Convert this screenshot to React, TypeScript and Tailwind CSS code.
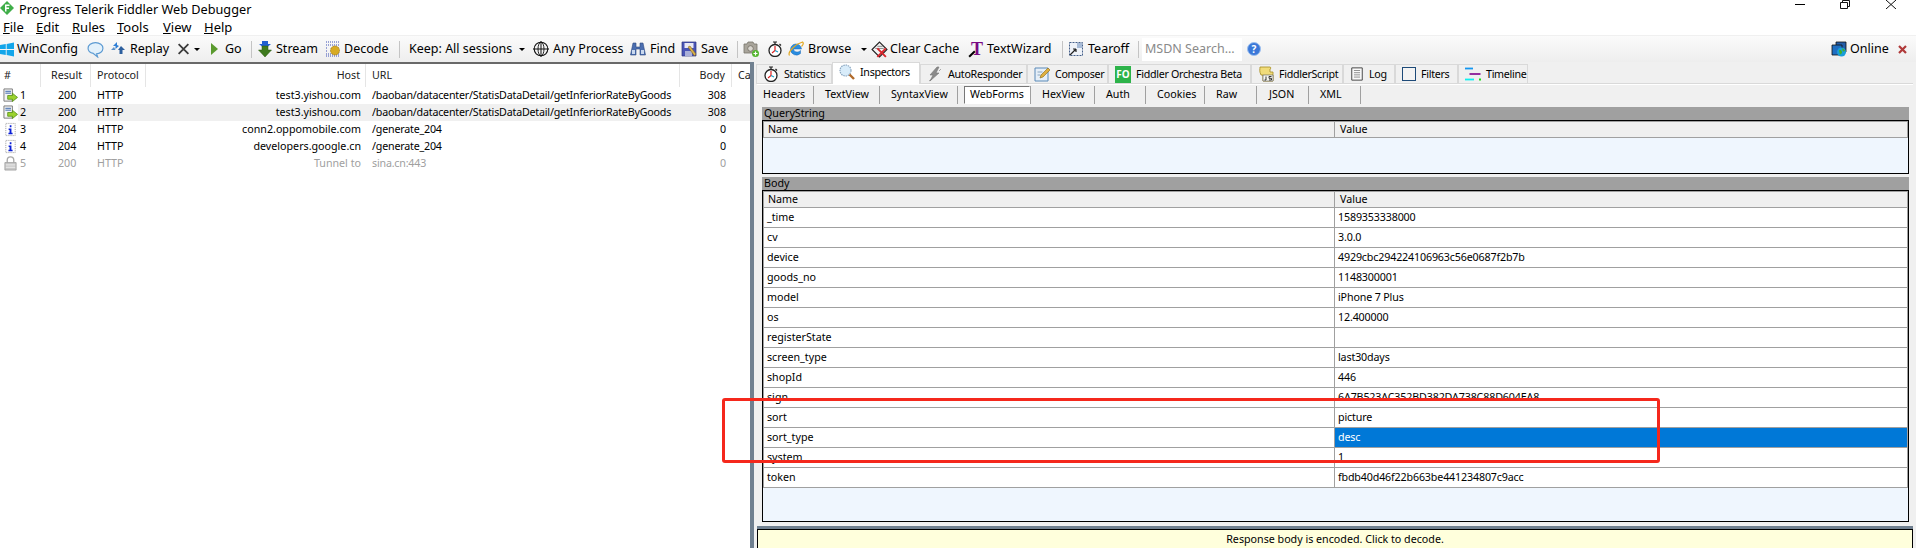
import React from 'react';

const Svg = ({ children, className = 'w-4 h-4' }: { children: React.ReactNode; className?: string }) => (
    <svg viewBox="0 0 16 16" className={`shrink-0 ${className}`}>{children}</svg>
);

const Stopwatch = () => (
    <Svg>
        <path d="M6 1h4M8 1v2M12.5 3l1.5 1.5" stroke="#222" strokeWidth="1.2" fill="none" />
        <circle cx="8" cy="9.5" r="6" fill="#fff" stroke="#222" strokeWidth="1.3" />
        <path d="M8 5v4.5L5 12" stroke="#d22" strokeWidth="1.2" fill="none" />
        <path d="M8 9.5L11 11" stroke="#1aa3c9" strokeWidth="1.2" fill="none" />
    </Svg>
);

const WinLogo = () => (
    <Svg className="w-[14px] h-[15px]">
        <path d="M0 2.8L6.6 1.8V7.5H0zM7.6 1.6L16 0V7.5H7.6zM0 8.5H6.6V14.2L0 13.2zM7.6 8.5H16V16L7.6 14.4z" fill="#12a5ea" />
    </Svg>
);

const Bubble = () => (
    <Svg className="w-[17px] h-[17px]">
        <path d="M8 1.5c4 0 7 2.3 7 5.3s-3 5.2-6 5.2l1 3-4-3.3c-2.8-.6-5-2.5-5-4.9C1 3.8 4 1.5 8 1.5z" fill="#e3f1fb" stroke="#5c9ad2" strokeWidth="1.1" />
    </Svg>
);

const Replay = () => (
    <Svg>
        <path d="M7 1L3 5h2.5v3L9 5 7 4z" fill="#2f7fd6" />
        <path d="M1 9l3-3 1.5 3H4z" fill="#5a8fc8" />
        <path d="M11 5l4 4h-2.5v4h-3V9H8z" fill="#2c5f9e" />
    </Svg>
);

const RemoveX = () => (
    <Svg className="w-[13px] h-[14px]">
        <path d="M2 2l12 12M14 2L2 14" stroke="#3c3c3c" strokeWidth="2.2" fill="none" />
    </Svg>
);

const Caret = () => <span className="block w-0 h-0 shrink-0 border-x-[3px] border-x-transparent border-t-[3px] border-t-black" />;

const Stream = () => (
    <Svg>
        <path d="M5 0h6v3h3L8 8 2 3h3z" fill="#1f5fd0" />
        <path d="M5 5h6v4h3.5L8 16 1.5 9H5z" fill="#3f7a1e" stroke="#2a5a10" strokeWidth=".5" />
    </Svg>
);

const Decode = () => (
    <Svg>
        <path d="M1 1h14M1 4h14M1 7h2M1 10h2M1 13h14M1 15h14" stroke="#3b4fb5" strokeWidth="1" strokeDasharray="1 1" fill="none" />
        <circle cx="10" cy="9.5" r="4.5" fill="#d8ab24" stroke="#8a6a10" strokeWidth=".8" strokeDasharray="1 .7" />
    </Svg>
);

const Crosshair = () => (
    <Svg>
        <circle cx="8" cy="8" r="6.8" fill="none" stroke="#111" strokeWidth="1.1" />
        <ellipse cx="8" cy="8" rx="3" ry="6.8" fill="none" stroke="#111" strokeWidth=".9" />
        <path d="M0 8h16M8 0v16" stroke="#111" strokeWidth="1" />
    </Svg>
);

const Binoculars = () => (
    <Svg>
        <path d="M3 2h3v4h4V2h3l2.5 12H10V8H6v6H.5z" fill="#4b6eb0" stroke="#2f4a80" strokeWidth=".6" />
        <path d="M2 9h3v4H2zM11 9h3v4h-3z" fill="#c9d8ee" />
    </Svg>
);

const Floppy = () => (
    <Svg>
        <path d="M1 1h14v14H1z" fill="#4a55b5" stroke="#2c3580" strokeWidth=".7" />
        <path d="M3.5 2h9v5h-9z" fill="#e8e8f4" />
        <path d="M4 10h7v5H4z" fill="#aab0d8" />
        <path d="M7 6l2-1 6 8-1.5 2z" fill="#d9b24a" stroke="#7a5a10" strokeWidth=".5" />
    </Svg>
);

const Camera = () => (
    <Svg>
        <path d="M1 3h3l1-2h5l1 2h3v9H1z" fill="#a9a59b" stroke="#77736a" strokeWidth=".8" />
        <circle cx="7.5" cy="7.5" r="2.8" fill="#d9d6cf" stroke="#6e6a60" strokeWidth=".8" />
        <circle cx="12.5" cy="12.5" r="3.5" fill="#53b52d" />
        <path d="M10.5 12.5h4M12.5 10.5v4" stroke="#fff" strokeWidth="1.2" />
    </Svg>
);

const IeLogo = () => (
    <Svg>
        <path d="M2.5 9a5.5 5.5 0 0 1 11-1H5.5c0 3.3 4.5 4 7 1.5v3a6 6 0 0 1-10-3.5z" fill="#2a8de0" stroke="#1c6bb8" strokeWidth=".5" />
        <path d="M1.5 14.5C-1 11 8.5 2.5 14.5 1c1.5 1 .5 3-1 4.5" fill="none" stroke="#e2a822" strokeWidth="1.2" />
    </Svg>
);

const ClearCache = () => (
    <Svg className="w-[17px] h-[17px]">
        <path d="M8 1l7 7-7 7-7-7z" fill="#f4f4f4" stroke="#222" strokeWidth="1.1" />
        <path d="M4 7h8M6 5h5" stroke="#777" strokeWidth=".8" />
        <path d="M6 7l8 8M14 7l-8 8" stroke="#d8262c" strokeWidth="1.8" />
    </Svg>
);

const Wizard = () => (
    <span className="relative flex w-[15px] h-[16px] shrink-0 items-center justify-end">
        <span className="font-['Liberation_Serif',serif] font-bold text-[18px] leading-none text-[#7a0a84]">T</span>
        <span className="absolute left-0 bottom-[2px] w-[8px] h-[2px] -rotate-45 bg-black" />
    </span>
);

const Tearoff = () => (
    <Svg>
        <path d="M1.5 1.5h13v13h-13z" fill="#eef2f8" stroke="#46608a" strokeWidth="1" strokeDasharray="2 1" />
        <path d="M2 14l6-6M8 8H5M8 8v3" stroke="#222" strokeWidth="1.2" fill="none" />
        <path d="M9 2h5v5H9z" fill="#a8bcd8" />
    </Svg>
);

const Help = () => (
    <span className="flex w-[14px] h-[14px] shrink-0 items-center justify-center rounded-full bg-[#3b78d8] border border-[#9cc0f0] text-white text-[10px] font-bold leading-none">?</span>
);

const OnlineIcon = () => (
    <Svg>
        <path d="M5 1h10v10H5z" fill="#245da8" stroke="#111" strokeWidth=".8" />
        <path d="M1 4h10v10H1z" fill="#1f6ec2" stroke="#111" strokeWidth=".8" />
        <circle cx="10.5" cy="11" r="4.5" fill="#1a9ed8" />
        <path d="M8 9.5c1.5-1 2.5 0 3 1s-1 3-2 3zM11 7.5c1.5 0 3 1.5 3 2.5l-2 .5z" fill="#43b02a" />
    </Svg>
);

const SessionIcon = ({ kind }: { kind: string }) => {
    if (kind === 'arrow') {
        return (
            <Svg className="w-[15px] h-[15px]">
                <path d="M1 1h9v13H1z" fill="#f4f4f4" stroke="#777" strokeWidth="1" />
                <path d="M2.5 3.5h6M2.5 5.5h6" stroke="#2f5fa8" strokeWidth="1" />
                <path d="M5 8h5V5.5L15.5 10 10 14.5V12H5z" fill="#9bd22e" stroke="#4f8a12" strokeWidth=".8" />
            </Svg>
        );
    }
    if (kind === 'info') {
        return (
            <Svg className="w-[15px] h-[15px]">
                <path d="M3 1.5h10v13H3z" fill="#fff" stroke="#9a9a9a" strokeWidth="1" strokeDasharray="1 1" />
                <path d="M7.2 3.5h1.8v2H7.2zM6 7h3v4.5h1.2V13H5.8v-1.5H7V8.5H6z" fill="#0a1fd6" />
            </Svg>
        );
    }
    return (
        <Svg className="w-[15px] h-[15px]">
            <path d="M4.5 7V4.5a3.5 3.5 0 0 1 7 0V7" fill="none" stroke="#a8a8a8" strokeWidth="1.4" />
            <path d="M2 7h12v8H2z" fill="#c8c8c8" stroke="#9a9a9a" strokeWidth=".8" />
            <path d="M3 9.5h10M3 12h10" stroke="#eee" strokeWidth="1" />
        </Svg>
    );
};

const Sep = ({ className }: { className: string }) => (
    <div className={`flex shrink-0 ${className}`}><span className="w-px h-[17px] bg-[#c4c4c4]" /></div>
);

const Tool = ({ className, icon, label, gap = 'gap-1' }: { className: string; icon?: React.ReactNode; label?: string; gap?: string }) => (
    <div className={`flex shrink-0 items-center ${gap} ${className}`}>
        {icon}
        {label && <span className="whitespace-nowrap">{label}</span>}
    </div>
);

const sessions = [
    { id: 1, icon: 'arrow', result: 200, host: 'test3.yishou.com', url: '/baoban/datacenter/StatisDataDetail/getInferiorRateByGoods', body: 308 },
    { id: 2, icon: 'arrow', result: 200, host: 'test3.yishou.com', url: '/baoban/datacenter/StatisDataDetail/getInferiorRateByGoods', body: 308, selected: true },
    { id: 3, icon: 'info', result: 204, host: 'conn2.oppomobile.com', url: '/generate_204', body: 0 },
    { id: 4, icon: 'info', result: 204, host: 'developers.google.cn', url: '/generate_204', body: 0 },
    { id: 5, icon: 'lock', result: 200, host: 'Tunnel to', url: 'sina.cn:443', body: 0, muted: true },
];

const params = [
    ['_time', '1589353338000'],
    ['cv', '3.0.0'],
    ['device', '4929cbc294224106963c56e0687f2b7b'],
    ['goods_no', '1148300001'],
    ['model', 'iPhone 7 Plus'],
    ['os', '12.400000'],
    ['registerState', ''],
    ['screen_type', 'last30days'],
    ['shopId', '446'],
    ['sign', '6A7B523AC352BD382DA738C88D604EA8'],
    ['sort', 'picture'],
    ['sort_type', 'desc'],
    ['system', '1'],
    ['token', 'fbdb40d46f22b663be441234807c9acc'],
];

const tabs: { label: string; w: string; icon: React.ReactNode; active?: boolean }[] = [
    { label: 'Statistics', w: 'w-[76px]', icon: <Stopwatch /> },
    {
        label: 'Inspectors', w: 'w-[88px]', active: true, icon: (
            <Svg>
                <circle cx="6.5" cy="6.5" r="5.5" fill="#d8ecfa" stroke="#8aa6c0" strokeWidth="1.2" strokeDasharray="1.5 .8" />
                <path d="M10.5 10.5l4.5 4.5" stroke="#b06a2a" strokeWidth="2.4" />
            </Svg>
        )
    },
    {
        label: 'AutoResponder', w: 'w-[107px]', icon: (
            <Svg>
                <path d="M10 1L3 9h3l-3 6 9-8H9l3-6zM14 3l-2 2M5 13l-3 2" fill="#8a8a8a" stroke="#777" strokeWidth=".6" />
            </Svg>
        )
    },
    {
        label: 'Composer', w: 'w-[81px]', icon: (
            <Svg>
                <path d="M1 2h13v13H1z" fill="#e6eff8" stroke="#5b8ab8" strokeWidth="1" />
                <path d="M3.5 6h5M3.5 9h3" stroke="#8aa6c0" strokeWidth="1" />
                <path d="M6 12l1-3 7-7 2 2-7 7z" fill="#e0b040" stroke="#8a6a10" strokeWidth=".6" />
            </Svg>
        )
    },
    {
        label: 'Fiddler Orchestra Beta', w: 'w-[143px]', icon: (
            <span className="flex w-[16px] h-[17px] shrink-0 items-center justify-center bg-[#2db34a] text-white text-[10px] font-bold leading-none tracking-normal">FO</span>
        )
    },
    {
        label: 'FiddlerScript', w: 'w-[92px]', icon: (
            <Svg>
                <path d="M2 1h10c1 0 1 2 0 2v3h3v9H5V9H3C1 5 2 3 2 1z" fill="#f1dc7a" stroke="#a58a20" strokeWidth=".8" />
                <path d="M5 9h10v6H5z" fill="#f8f8f0" stroke="#555" strokeWidth=".6" />
                <path d="M8 10.5V14H6.5M13.5 10.5H11V12.3h2.5V14H11" fill="none" stroke="#222" strokeWidth=".9" />
            </Svg>
        )
    },
    {
        label: 'Log', w: 'w-[52px]', icon: (
            <Svg className="w-[14px] h-[14px]">
                <path d="M2 1h12v14H2z" fill="#fafafa" stroke="#444" strokeWidth="1.1" />
                <path d="M4.5 4h7M4.5 6.5h7M4.5 9h7M4.5 11.5h7" stroke="#777" strokeWidth=".9" />
            </Svg>
        )
    },
    {
        label: 'Filters', w: 'w-[63px]', icon: (
            <span className="w-[14px] h-[14px] shrink-0 border border-[#1d4a78] bg-[#f3f3f3]" />
        )
    },
    {
        label: 'Timeline', w: 'w-[70px]', icon: (
            <Svg>
                <path d="M0 2.5h8" stroke="#1497f0" strokeWidth="1.8" />
                <path d="M4.5 8h11" stroke="#8a1a96" strokeWidth="1.8" />
                <path d="M0 13.5h9" stroke="#10f0f0" strokeWidth="1.8" />
                <path d="M14 13.5h2" stroke="#18e018" strokeWidth="1.8" />
            </Svg>
        )
    },
];

const subTabs = [
    { label: 'Headers', w: 'w-[57px]', pad: 'pl-[6px]' },
    { label: 'TextView', w: 'w-[66px]', pad: 'pl-[11px]' },
    { label: 'SyntaxView', w: 'w-[78px]', pad: 'pl-[11px]' },
    { label: 'WebForms', w: 'w-[73px]', pad: 'pl-[12px]', active: true },
    { label: 'HexView', w: 'w-[64px]', pad: 'pl-[11px]' },
    { label: 'Auth', w: 'w-[51px]', pad: 'pl-[11px]' },
    { label: 'Cookies', w: 'w-[59px]', pad: 'pl-[11px]' },
    { label: 'Raw', w: 'w-[52px]', pad: 'pl-[11px]' },
    { label: 'JSON', w: 'w-[52px]', pad: 'pl-[12px]' },
    { label: 'XML', w: 'w-[52px]', pad: 'pl-[11px]' },
];

const ListHeader = () => (
    <div className="flex h-[17px] shrink-0 items-center bg-[#efefef] border border-[#a0a0a0]">
        <div className="w-[571px] pl-[4px] border-r border-[#a0a0a0] h-full flex items-center">Name</div>
        <div className="pl-[5px]">Value</div>
    </div>
);

export default function App() {
    return (
        <div className="relative flex flex-col w-[1916px] h-[548px] overflow-hidden bg-white text-black font-['Noto_Sans',sans-serif] text-[10.7px] leading-none">
            {/* title bar */}
            <div className="flex h-[18px] items-center justify-between shrink-0">
                <div className="flex items-center gap-[5px]">
                    <svg viewBox="0 0 14 14" className="w-[14px] h-[14px] shrink-0 -mt-[2px]">
                        <path d="M7 0l7 7-7 7-7-7z" fill="#3fae49" />
                        <path d="M5 3.5h4.5V5H6.5v1.5H9V8H6.5v2.5H5z" fill="#fff" />
                    </svg>
                    <span className="text-[12.7px] mt-[1px]">Progress Telerik Fiddler Web Debugger</span>
                </div>
                <div className="flex h-full items-start">
                    <span className="w-[10px] h-px bg-black mt-[4px]" />
                    <svg viewBox="0 0 10 9" className="w-[10px] h-[9px] ml-[35px]" fill="none" stroke="#111">
                        <path d="M.5 2.5h7v6h-7zM2.5 2.5V.5h7v6h-2" />
                    </svg>
                    <svg viewBox="0 0 10 9" className="w-[10px] h-[9px] ml-[36px] mr-[20px]">
                        <path d="M0 0l10 9M10 0L0 9" stroke="#111" strokeWidth="1" />
                    </svg>
                </div>
            </div>

            {/* menu */}
            <div className="flex h-[17px] shrink-0 items-center text-[13px] pl-[3px] pt-[2px]">
                <span className="w-[33px]"><u>F</u>ile</span>
                <span className="w-[36px]"><u>E</u>dit</span>
                <span className="w-[45px]"><u>R</u>ules</span>
                <span className="w-[46px]"><u>T</u>ools</span>
                <span className="w-[41px]"><u>V</u>iew</span>
                <span><u>H</u>elp</span>
            </div>

            {/* toolbar */}
            <div className="flex h-[27px] shrink-0 items-center border-t border-[#f0f0f0] bg-gradient-to-b from-[#fbfbfb] to-[#eeeeee] text-[12.5px]">
                <Tool className="w-[87px]" gap="gap-[3px]" icon={<WinLogo />} label="WinConfig" />
                <Tool className="w-[23px]" icon={<Bubble />} />
                <Tool className="w-[67px]" icon={<Replay />} label="Replay" />
                <Tool className="w-[33px]" icon={<><RemoveX /><Caret /></>} />
                <Tool className="w-[41px] pl-[1px]" gap="gap-[7px]" icon={<span className="w-0 h-0 border-y-[6px] border-y-transparent border-l-[7px] border-l-[#5a9a2e]" />} label="Go" />
                <Sep className="w-[6px]" />
                <Tool className="w-[68px]" gap="gap-[3px]" icon={<Stream />} label="Stream" />
                <Tool className="w-[74px]" gap="gap-[3px]" icon={<Decode />} label="Decode" />
                <Sep className="w-[10px]" />
                <div className="flex w-[124px] shrink-0 items-center gap-[7px] whitespace-nowrap">Keep: All sessions<Caret /></div>
                <Tool className="w-[97px]" icon={<Crosshair />} label="Any Process" />
                <Tool className="w-[51px]" icon={<Binoculars />} label="Find" />
                <Tool className="w-[56px]" icon={<Floppy />} label="Save" />
                <Sep className="w-[6px]" />
                <Tool className="w-[24px]" icon={<Camera />} />
                <Tool className="w-[21px]" icon={<Stopwatch />} />
                <div className="flex w-[83px] shrink-0 items-center gap-1"><IeLogo />Browse<span className="flex ml-[6px]"><Caret /></span></div>
                <Tool className="w-[97px]" gap="gap-[2px]" icon={<ClearCache />} label="Clear Cache" />
                <Tool className="w-[94px]" icon={<Wizard />} label="TextWizard" />
                <Sep className="w-[6px]" />
                <Tool className="w-[70px]" icon={<Tearoff />} label="Tearoff" />
                <Sep className="w-[4px]" />
                <div className="flex w-[100px] h-[23px] shrink-0 items-center bg-white pl-[3px] text-[#8a8a8a] whitespace-nowrap">MSDN Search...</div>
                <div className="w-[5px] shrink-0" />
                <Help />
                <div className="flex-1" />
                <OnlineIcon />
                <span className="ml-[3px] w-[48px]">Online</span>
                <svg viewBox="0 0 9 9" className="w-[9px] h-[9px] mr-[9px] shrink-0">
                    <path d="M1 1l7 7M8 1L1 8" stroke="#b03a3a" strokeWidth="2.2" />
                </svg>
            </div>

            <div className="flex flex-1 min-h-0">
                {/* session list */}
                <div className="flex flex-col w-[750px] shrink-0 border-t-2 border-[#696969] overflow-hidden">
                    <div className="grid grid-cols-[41px_50px_55px_220px_314px_52px_18px] h-[23px] shrink-0 items-center text-[#222]">
                        <div className="pl-[4px] h-full flex items-center border-r border-[#e5e5e5]">#</div>
                        <div className="pl-[10px] h-full flex items-center border-r border-[#e5e5e5]">Result</div>
                        <div className="pl-[6px] h-full flex items-center border-r border-[#e5e5e5]">Protocol</div>
                        <div className="pr-[5px] h-full flex items-center justify-end border-r border-[#e5e5e5]">Host</div>
                        <div className="pl-[6px] h-full flex items-center border-r border-[#e5e5e5]">URL</div>
                        <div className="pr-[6px] h-full flex items-center justify-end border-r border-[#e5e5e5]">Body</div>
                        <div className="pl-[6px] whitespace-nowrap">Ca</div>
                    </div>
                    {sessions.map(s => (
                        <div key={s.id} className={`grid grid-cols-[41px_50px_55px_220px_314px_52px_18px] h-[17px] shrink-0 items-center ${s.muted ? 'text-[#a0a0a0]' : 'text-black'}`}>
                            <div className="flex items-center h-full">
                                <span className="pl-[3px]"><SessionIcon kind={s.icon} /></span>
                                <span className={`flex-1 self-stretch flex items-center pl-[2px] ${s.selected ? 'bg-[#f0f0f0]' : ''}`}>{s.id}</span>
                            </div>
                            <div className={`pl-[17px] h-full flex items-center ${s.selected ? 'bg-[#f0f0f0]' : ''}`}>{s.result}</div>
                            <div className={`pl-[6px] h-full flex items-center ${s.selected ? 'bg-[#f0f0f0]' : ''}`}>HTTP</div>
                            <div className={`pr-[5px] h-full flex items-center justify-end ${s.selected ? 'bg-[#f0f0f0]' : ''}`}>{s.host}</div>
                            <div className={`pl-[6px] h-full flex items-center whitespace-nowrap tracking-[-.2px] ${s.selected ? 'bg-[#f0f0f0]' : ''}`}>{s.url}</div>
                            <div className={`pr-[6px] h-full flex items-center justify-end ${s.selected ? 'bg-[#f0f0f0]' : ''}`}>{s.body}</div>
                            <div className={`h-full ${s.selected ? 'bg-[#f0f0f0]' : ''}`} />
                        </div>
                    ))}
                </div>

                {/* splitter */}
                <div className="w-[5px] shrink-0 bg-[#708090] border-r border-[#f0f0f0]" />

                {/* inspectors */}
                <div className="flex flex-col flex-1 min-w-0 bg-[#f0f0f0]">
                    <div className="flex h-[22px] shrink-0 items-end pl-[1px] -mb-px tracking-[-.3px]">
                        {tabs.map(t => (
                            <div key={t.label} className={`flex shrink-0 items-center gap-[5px] whitespace-nowrap ${t.w} ${t.active ? 'h-[22px] bg-white border border-b-0 border-[#d9d9d9] pl-[6px] pb-[3px] relative z-10' : 'h-[20px] bg-[#f0f0f0] border border-[#d9d9d9] pl-[6px]'}`}>
                                {t.icon}
                                <span>{t.label}</span>
                            </div>
                        ))}
                    </div>
                    <div className="flex flex-col flex-1 min-h-0 mr-[3px] ml-[2px] border-t border-[#d9d9d9]">
                        <div className="h-px shrink-0 bg-white" />
                        <div className="flex h-[19px] shrink-0 items-center">
                            {subTabs.map(t => (
                                <div key={t.label} className={`flex h-[18px] shrink-0 items-center border-r border-[#a0a0a0] ${t.w} ${t.pad}`}>
                                    {t.active ? (
                                        <span className="flex h-[18px] items-center -ml-[6px] px-[5px] bg-white border border-[#777] border-b-white border-r-white">{t.label}</span>
                                    ) : t.label}
                                </div>
                            ))}
                        </div>
                        <div className="flex flex-col flex-1 min-h-0 pt-[3px] ml-[5px] mr-[4px]">
                            <div className="flex h-[13px] shrink-0 items-center bg-[#a0a0a0] pl-[2px]">QueryString</div>
                            <div className="flex flex-col h-[54px] shrink-0 border border-black bg-[#eff6fe]">
                                <ListHeader />
                            </div>
                            <div className="h-[3px] shrink-0" />
                            <div className="flex h-[13px] shrink-0 items-center bg-[#a0a0a0] pl-[2px]">Body</div>
                            <div className="flex flex-col h-[332px] shrink-0 border border-black bg-[#eff6fe]">
                                <ListHeader />
                                {params.map(([name, value]) => (
                                    <div key={name} className="flex h-[20px] shrink-0 items-center bg-white border-l border-r border-b border-[#a0a0a0]">
                                        <div className="w-[571px] h-full flex items-center pl-[3px] border-r border-[#a0a0a0]">{name}</div>
                                        <div className={`flex-1 h-full flex items-center pl-[3px] tracking-[-.15px] ${name === 'sort_type' ? 'bg-[#0078d7] text-white' : ''}`}>{value}</div>
                                    </div>
                                ))}
                            </div>
                        </div>
                        <div className="h-[3px] shrink-0 bg-[#708090]" />
                        <div className="flex h-[19px] shrink-0 items-center justify-center bg-[#ffffdc] border-t border-x border-black">Response body is encoded. Click to decode.</div>
                    </div>
                </div>
            </div>

            {/* red annotation drawn on top of the screenshot */}
            <div className="absolute left-[722px] top-[398px] w-[938px] h-[65px] border-[3px] border-[#f5281c] rounded-[3px]" />
        </div>
    );
}
